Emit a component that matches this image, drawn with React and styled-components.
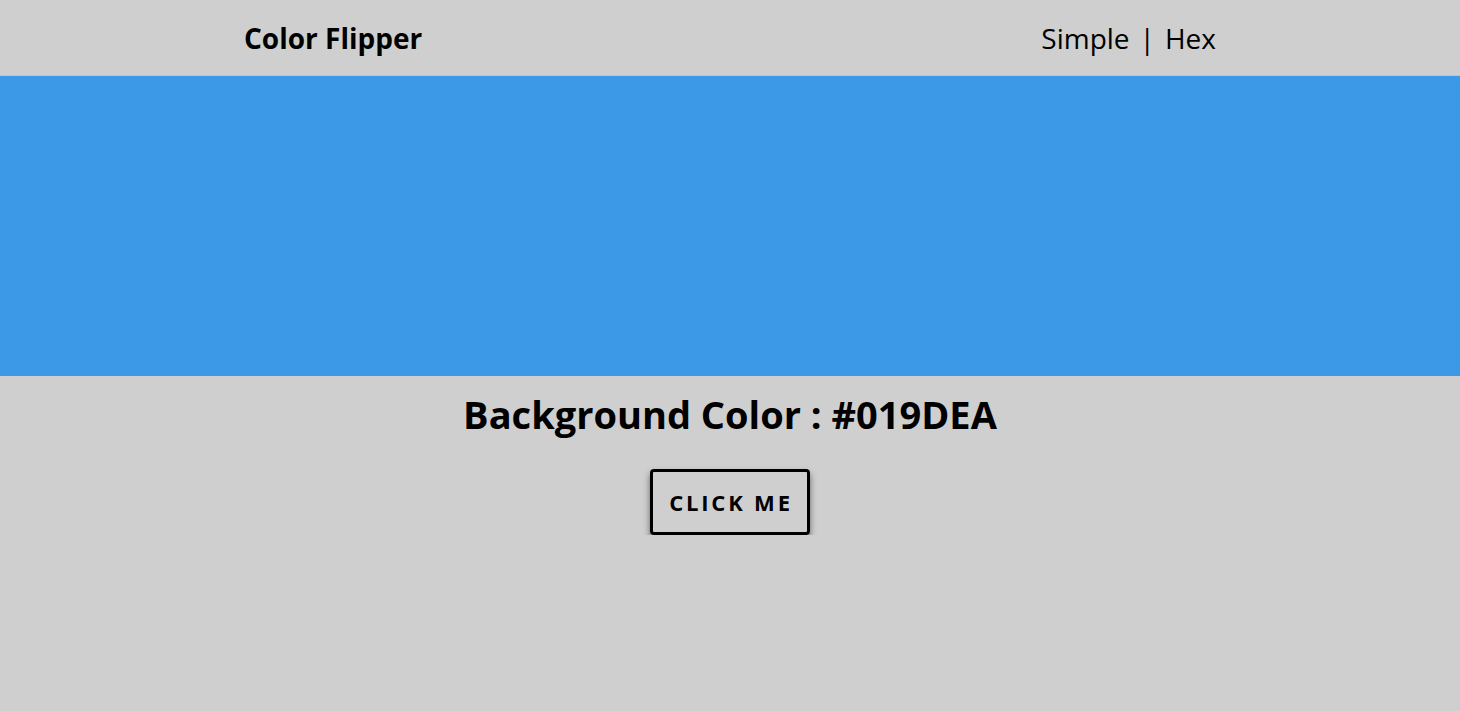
import React from "react";
import styled, { createGlobalStyle } from "styled-components";

const Global = createGlobalStyle`
  html, body { margin: 0; padding: 0; }
  body {
    background: #cfcfcf;
    font-family: "Open Sans", "DejaVu Sans", sans-serif;
    color: #000;
  }
`;

const Nav = styled.nav`
  height: 75px;
  border-bottom: 1px solid #c4c4c4;
  display: flex;
  justify-content: center;
`;

const NavInner = styled.div`
  width: 972px;
  display: flex;
  align-items: center;
  justify-content: space-between;
`;

const Brand = styled.h4`
  margin: 0;
  font-size: 28px;
  font-weight: 700;
`;

const Links = styled.ul`
  margin: 0;
  padding: 0;
  list-style: none;
  display: flex;
  gap: 10px;
  font-size: 28px;
`;

const Item = styled.li``;

const ColorBlock = styled.div`
  height: 300px;
  background: #3b99e8;
`;

const Main = styled.main`
  display: flex;
  flex-direction: column;
  align-items: center;
`;

const Heading = styled.h2`
  margin: 12px 0 0;
  font-size: 38px;
  font-weight: 700;
`;

const Button = styled.button`
  margin-top: 29px;
  width: 160px;
  height: 66px;
  padding: 0 0 0 2px;
  background: transparent;
  border: 3px solid #000;
  border-radius: 4px;
  box-shadow: 0 4px 6px rgba(0, 0, 0, 0.5);
  font-family: inherit;
  font-size: 22px;
  font-weight: 700;
  letter-spacing: 2.8px;
  text-transform: uppercase;
  color: #000;
  cursor: pointer;
`;

export default function App() {
  return (
    <>
      <Global />
      <Nav>
        <NavInner>
          <Brand>Color Flipper</Brand>
          <Links>
            <Item>Simple</Item>
            <Item>|</Item>
            <Item>Hex</Item>
          </Links>
        </NavInner>
      </Nav>
      <ColorBlock />
      <Main>
        <Heading>Background Color : #019DEA</Heading>
        <Button>click me</Button>
      </Main>
    </>
  );
}
